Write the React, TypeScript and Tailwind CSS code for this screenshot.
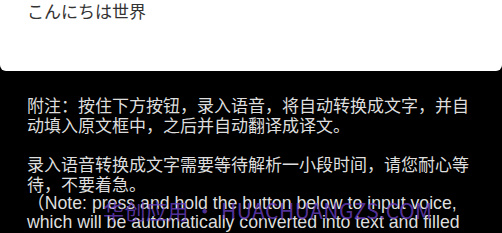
import React from "react";

export default function App() {
  const font = { fontFamily: '"Noto Sans CJK SC", "Noto Sans", sans-serif' };
  return (
    <div className="relative w-[502px] h-[233px] overflow-hidden bg-black" style={font}>
      <div className="h-[71px] bg-white rounded-b-[6px] px-[27px] pt-[1px]">
        <p className="text-[17px] leading-[20px] text-[#333]">こんにちは世界</p>
      </div>
      <div className="px-[27px] pt-[24px] text-[17px] leading-[20px] text-[#dedede]">
        <p>附注：按住下方按钮，录入语音，将自动转换成文字，并自动填入原文框中，之后并自动翻译成译文。</p>
        <p className="mt-[19px]">录入语音转换成文字需要等待解析一小段时间，请您耐心等待，不要着急。</p>
        <p className="leading-[19px] text-[17.7px]" style={{ fontFamily: '"Liberation Sans", "Noto Sans CJK SC", sans-serif' }}>
          （Note: press and hold the button below to input voice, which will be automatically converted into text and filled
        </p>
      </div>
      <div className="absolute left-[103px] top-[198px] text-[21px] leading-[24px] text-[#6a3fc0]/80 tracking-[0.5px] whitespace-nowrap">
        华创应用 • HUACHUANGZS.COM
      </div>
    </div>
  );
}
